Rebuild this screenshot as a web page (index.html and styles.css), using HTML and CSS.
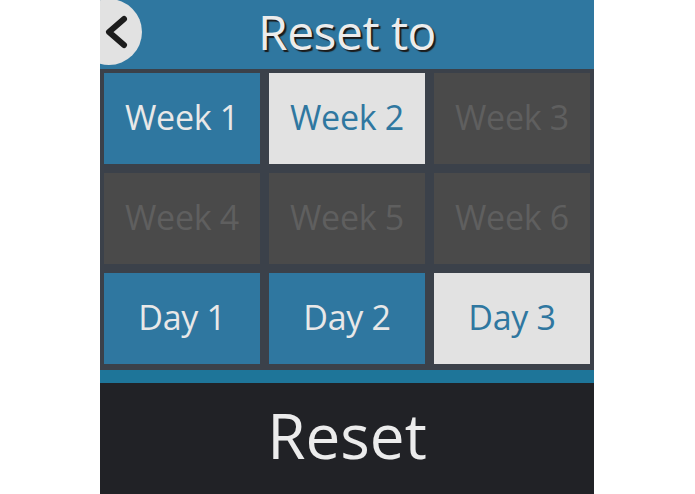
FILE: index.html
```html
<!DOCTYPE html>
<html lang="en">

<head>
    <meta charset="UTF-8">
    <meta name="viewport" content="width=device-width, initial-scale=1.0">
    <title>Reset to</title>
    <link rel="stylesheet" href="styles.css">
</head>

<body>
    <div class="panel">
        <div class="header">
            <button class="back-btn" aria-label="Back">
                <svg width="34" height="66" viewBox="0 0 34 66">
                    <polyline points="28,20 13,33 28,46" fill="none" stroke="#1c1c1c" stroke-width="6"
                        stroke-linecap="round" stroke-linejoin="round" />
                </svg>
            </button>
            <h2>Reset to</h2>
        </div>
        <div class="grid">
            <div class="cell active">Week 1</div>
            <div class="cell selected">Week 2</div>
            <div class="cell disabled">Week 3</div>
            <div class="cell disabled">Week 4</div>
            <div class="cell disabled">Week 5</div>
            <div class="cell disabled">Week 6</div>
            <div class="cell active">Day 1</div>
            <div class="cell active">Day 2</div>
            <div class="cell selected">Day 3</div>
        </div>
        <div class="strip"></div>
        <button class="reset-btn">Reset</button>
    </div>
</body>

</html>
```

FILE: styles.css
```css
body {
    font-family: "Open Sans", Arial, sans-serif;
    background-color: #fff;
    margin: 0;
    padding: 0;
}

.panel {
    width: 494px;
    height: 494px;
    margin-left: 100px;
    display: flex;
    flex-direction: column;
    overflow: hidden;
    background-color: #3b414a;
}

.header {
    position: relative;
    height: 69px;
    background-color: #2f77a0;
    display: flex;
    align-items: center;
    justify-content: center;
}

.header h2 {
    margin: 0 0 6px;
    font-size: 48px;
    font-weight: 400;
    color: #ececec;
    text-shadow: 2px 2px 1px #1b1b1b;
    letter-spacing: -0.5px;
}

.back-btn {
    position: absolute;
    left: -24px;
    top: -1px;
    width: 66px;
    height: 66px;
    border: none;
    border-radius: 50%;
    background-color: #e2e2e2;
    padding: 0 0 0 20px;
    display: flex;
    align-items: center;
    cursor: pointer;
}

.grid {
    display: grid;
    grid-template-columns: repeat(3, 1fr);
    grid-template-rows: repeat(3, 91px);
    gap: 9px;
    padding: 4px 4px 6px;
}

.cell {
    display: flex;
    align-items: center;
    justify-content: center;
    font-size: 34px;
    letter-spacing: -0.3px;
    padding-bottom: 3px;
}

.active {
    background-color: #2f77a0;
    color: #e8e8e8;
}

.selected {
    background-color: #e2e2e2;
    color: #2f77a0;
}

.disabled {
    background-color: #4a4a4a;
    color: #5f5f5f;
}

.strip {
    height: 13px;
    background-color: #1e7599;
}

.reset-btn {
    flex: 1;
    border: none;
    background-color: #212226;
    color: #ececec;
    font-family: "Open Sans", Arial, sans-serif;
    font-size: 62px;
    padding: 0 0 8px;
    cursor: pointer;
}
```
